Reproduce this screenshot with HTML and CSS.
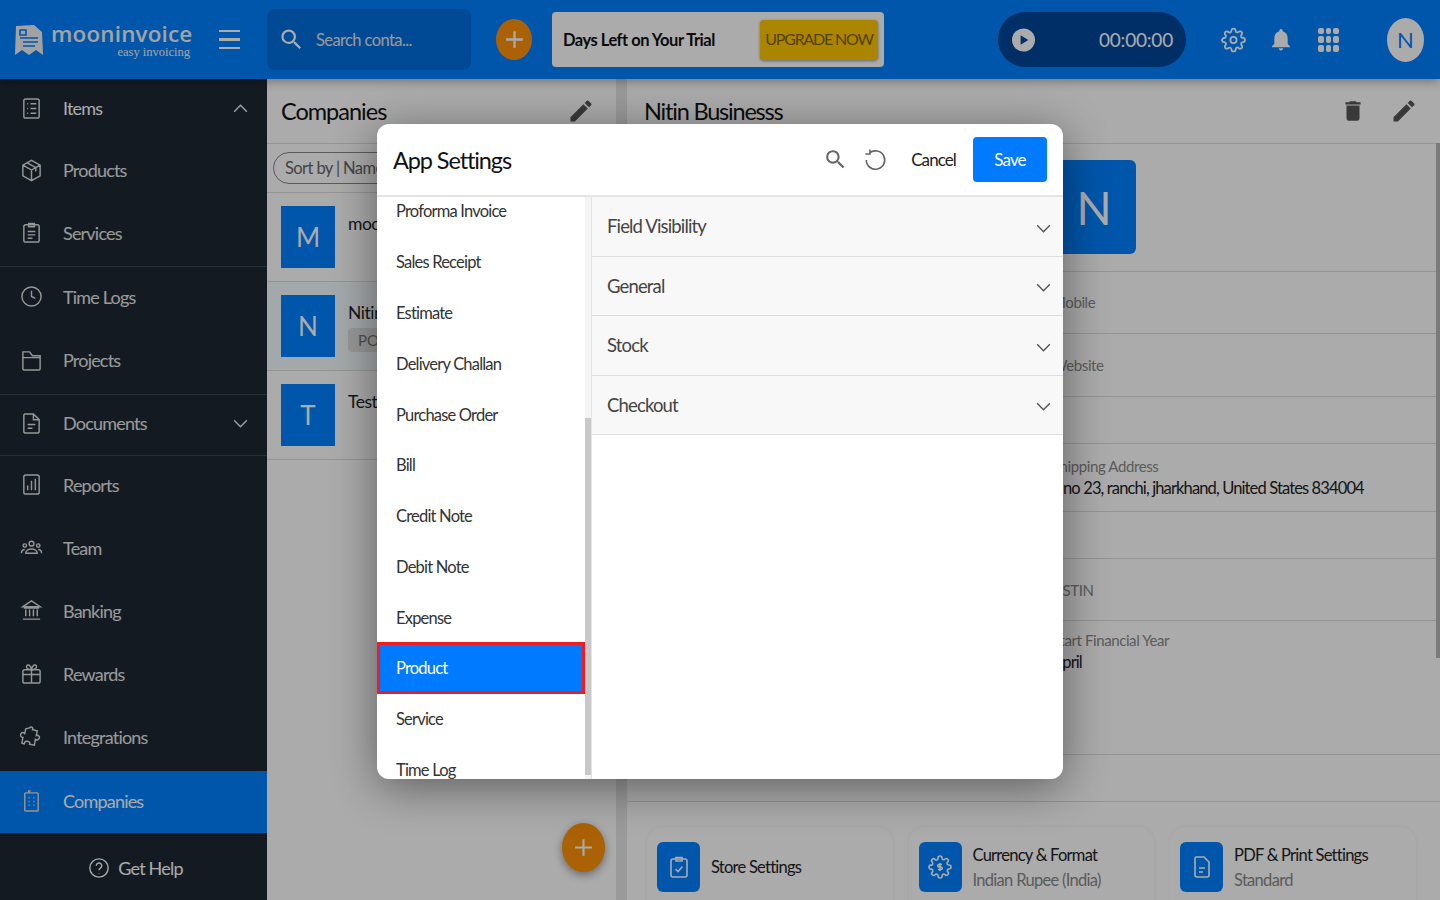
FILE: index.html
```html
<!DOCTYPE html>
<html lang="en">
<head>
    <meta charset="UTF-8">
    <title>Mooninvoice - App Settings</title>
    <link rel="stylesheet" href="styles.css">
</head>
<body>
    <header class="topbar">
        <div class="brand">
            <svg class="brand-icon" viewBox="0 0 28 32"><path d="M1 2 L19 1 L27 8 L28 31 L21 26 L14 31 L7 26 L0 31 Z" fill="#f2f2f2"/><path d="M5 6h6v5H5zM5 14h18M8 18h15M8 22h12" stroke="#0080ff" stroke-width="1.6" fill="none"/></svg>
            <div class="brand-text">
                <div class="brand-name">mooninvoice</div>
                <div class="brand-tag">easy invoicing</div>
            </div>
        </div>
        <div class="burger"><span></span><span></span><span></span></div>
        <div class="searchbox">
            <svg class="icon-search" viewBox="0 0 24 24"><path d="M15.5 14h-.79l-.28-.27A6.471 6.471 0 0 0 16 9.5 6.5 6.5 0 1 0 9.5 16c1.61 0 3.09-.59 4.23-1.57l.27.28v.79l5 4.99L20.49 19l-4.99-5zm-6 0C7.01 14 5 11.99 5 9.5S7.01 5 9.5 5 14 7.01 14 9.5 11.99 14 9.5 14z"/></svg>
            <span>Search conta...</span>
        </div>
        <div class="add-round">
            <svg viewBox="0 0 24 24"><path d="M12 4v16M4 12h16"/></svg>
        </div>
        <div class="trial">
            <span class="trial-text">Days Left on Your Trial</span>
            <span class="upgrade">UPGRADE NOW</span>
        </div>
        <div class="timer">
            <svg class="play" viewBox="0 0 24 24"><circle cx="12" cy="12" r="12" fill="#fff"/><path d="M9 7l8 5-8 5z" fill="#00479c"/></svg>
            <span>00:00:00</span>
        </div>
        <svg class="top-gear" viewBox="0 0 24 24"><circle cx="12" cy="12" r="3"/><path d="M19.4 15a1.65 1.65 0 0 0 .33 1.82l.06.06a2 2 0 0 1 0 2.83 2 2 0 0 1-2.83 0l-.06-.06a1.65 1.65 0 0 0-1.82-.33 1.65 1.65 0 0 0-1 1.51V21a2 2 0 0 1-2 2 2 2 0 0 1-2-2v-.09A1.65 1.65 0 0 0 9 19.4a1.65 1.65 0 0 0-1.82.33l-.06.06a2 2 0 0 1-2.83 0 2 2 0 0 1 0-2.83l.06-.06a1.65 1.65 0 0 0 .33-1.82 1.65 1.65 0 0 0-1.51-1H3a2 2 0 0 1-2-2 2 2 0 0 1 2-2h.09A1.65 1.65 0 0 0 4.6 9a1.65 1.65 0 0 0-.33-1.82l-.06-.06a2 2 0 0 1 0-2.83 2 2 0 0 1 2.83 0l.06.06a1.65 1.65 0 0 0 1.82.33H9a1.65 1.65 0 0 0 1-1.51V3a2 2 0 0 1 2-2 2 2 0 0 1 2 2v.09a1.65 1.65 0 0 0 1 1.51 1.65 1.65 0 0 0 1.82-.33l.06-.06a2 2 0 0 1 2.83 0 2 2 0 0 1 0 2.83l-.06.06a1.65 1.65 0 0 0-.33 1.82V9a1.65 1.65 0 0 0 1.51 1H21a2 2 0 0 1 2 2 2 2 0 0 1-2 2h-.09a1.65 1.65 0 0 0-1.51 1z"/></svg>
        <svg class="top-bell" viewBox="3 2 18 21"><path d="M12 22c1.1 0 2-.9 2-2h-4c0 1.1.9 2 2 2zm6-6v-5c0-3.07-1.63-5.64-4.5-6.32V4c0-.83-.67-1.5-1.5-1.5s-1.5.67-1.5 1.5v.68C7.64 5.36 6 7.92 6 11v5l-2 2v1h16v-1l-2-2z"/></svg>
        <div class="apps">
            <i></i><i></i><i></i><i></i><i></i><i></i><i></i><i></i><i></i>
        </div>
        <div class="avatar">N</div>
    </header>

    <div class="workspace">
        <nav class="sidebar">
            <div class="nav-group group-items">
                <div class="nav-row">
                    <svg viewBox="0 0 24 24"><rect x="4" y="2" width="16" height="20" rx="2"/><path d="M7.5 7h1M11 7h6M7.5 12h1M11 12h6M7.5 17h1M11 17h6"/></svg>
                    <span class="white">Items</span>
                    <svg class="chev" viewBox="0 0 24 24"><path d="M4 16l8-8 8 8"/></svg>
                </div>
                <div class="nav-row">
                    <svg viewBox="0 0 24 24"><path d="M12 1.5l9 5v11l-9 5-9-5v-11zM3 6.5l9 5 9-5M12 11.5v11M7.5 4l9 5v4"/></svg>
                    <span>Products</span>
                </div>
                <div class="nav-row">
                    <svg viewBox="0 0 24 24"><rect x="4" y="4" width="16" height="18" rx="2"/><path d="M9 2.5h6v3.500H9zM8 11h8M8 14.500h8M8 18h5"/></svg>
                    <span>Services</span>
                </div>
            </div>
            <div class="nav-group group-work">
                <div class="nav-row">
                    <svg viewBox="0 0 24 24"><circle cx="12" cy="12" r="10"/><path d="M12 6v6l4 2"/></svg>
                    <span>Time Logs</span>
                </div>
                <div class="nav-row">
                    <svg viewBox="0 0 24 24"><path d="M3 6V3h7l3 4h8v13a2 2 0 0 1-2 2H5a2 2 0 0 1-2-2zM3 9h18"/></svg>
                    <span>Projects</span>
                </div>
            </div>
            <div class="nav-group group-docs">
                <div class="nav-row">
                    <svg viewBox="0 0 24 24"><path d="M5 2h9l6 6v12a2 2 0 0 1-2 2H6a2 2 0 0 1-2-2V3zM14 2v6h6M8 13h8M8 17h5"/></svg>
                    <span>Documents</span>
                    <svg class="chev" viewBox="0 0 24 24"><path d="M4 8l8 8 8-8"/></svg>
                </div>
            </div>
            <div class="nav-group group-more">
                <div class="nav-row">
                    <svg viewBox="0 0 24 24"><rect x="4" y="2" width="16" height="20" rx="2"/><path d="M8 18v-5M12 18V8M16 18V6"/></svg>
                    <span>Reports</span>
                </div>
                <div class="nav-row">
                    <svg viewBox="0 0 24 24"><circle cx="12" cy="8" r="2.500"/><circle cx="5" cy="10" r="1.800"/><circle cx="19" cy="10" r="1.800"/><path d="M6 18c0-6 12-6 12 0zM1.500 18c0-3 2-4 3.500-4M22.500 18c0-3-2-4-3.500-4"/></svg>
                    <span>Team</span>
                </div>
                <div class="nav-row">
                    <svg viewBox="0 0 24 24"><path d="M3 8l9-6 9 6zM6 11v7M10 11v7M14 11v7M18 11v7M3 21h18M4 9.500h16"/></svg>
                    <span>Banking</span>
                </div>
                <div class="nav-row">
                    <svg viewBox="0 0 24 24"><rect x="3" y="8" width="18" height="14" rx="2"/><path d="M3 13h18M12 8v14M12 8C8 8 6 6 7 4s4-1 5 4c1-5 4-6 5-4s-1 4-5 4"/></svg>
                    <span>Rewards</span>
                </div>
                <div class="nav-row">
                    <svg viewBox="0 0 24 24"><path d="M10 3c2-2 4 0 3 2l5 1-1 5c2-1 4 1 3 3s-3 2-4 1l-1 6-5-1c1-2-1-3-3-3s-3 2-2 3l-3-1 1-6c-2 0-3-2-2-4s3-1 4 0l1-5z"/></svg>
                    <span>Integrations</span>
                </div>
            </div>
            <div class="nav-row nav-active">
                <svg viewBox="0 0 24 24"><rect x="5" y="3" width="14" height="19" rx="1"/><path d="M9 3V1h2M9 8h1M14 8h1M9 12h1M14 12h1M9 16h1M14 16h1"/></svg>
                <span>Companies</span>
            </div>
            <div class="get-help">
                <svg viewBox="0 0 24 24"><circle cx="12" cy="12" r="10"/><path d="M9 9.500a3 3 0 1 1 4.500 2.600c-1 .6-1.500 1.200-1.500 2.400M12 17.500v.5"/></svg>
                <span>Get Help</span>
            </div>
        </nav>

        <section class="companies">
            <div class="panel-head">
                <h2>Companies</h2>
                <svg class="tool" viewBox="0 0 24 24"><path d="M3 17.250V21h3.750L17.810 9.940l-3.750-3.750L3 17.250zM20.710 7.040a1 1 0 0 0 0-1.410l-2.340-2.340a1 1 0 0 0-1.410 0l-1.830 1.830 3.750 3.750 1.830-1.830z"/></svg>
            </div>
            <div class="sort-row">
                <div class="sort-pill">Sort by | Name</div>
            </div>
            <div class="company">
                <div class="tile">M</div>
                <div class="company-info"><div class="company-name">mooninvoice</div></div>
            </div>
            <div class="company company-selected">
                <div class="tile">N</div>
                <div class="company-info">
                    <div class="company-name">Nitin Businesss</div>
                    <div class="badge">POS</div>
                </div>
            </div>
            <div class="company">
                <div class="tile">T</div>
                <div class="company-info"><div class="company-name">Test</div></div>
            </div>
            <div class="fab">
                <svg viewBox="0 0 24 24"><path d="M12 4v16M4 12h16"/></svg>
            </div>
        </section>

        <section class="detail">
            <div class="panel-head detail-head">
                <h2>Nitin Businesss</h2>
                <svg class="tool trash" viewBox="0 0 24 24"><path d="M6 19c0 1.100.9 2 2 2h8c1.100 0 2-.9 2-2V7H6v12zM19 4h-3.500l-1-1h-5l-1 1H5v2h14V4z"/></svg>
                <svg class="tool" viewBox="0 0 24 24"><path d="M3 17.250V21h3.750L17.810 9.940l-3.750-3.750L3 17.250zM20.710 7.040a1 1 0 0 0 0-1.410l-2.340-2.340a1 1 0 0 0-1.410 0l-1.830 1.830 3.750 3.750 1.830-1.830z"/></svg>
            </div>
            <div class="field field-logo"><div class="logo-tile">N</div></div>
            <div class="field field-mobile"><div class="label">Mobile</div></div>
            <div class="field field-web"><div class="label">Website</div></div>
            <div class="field field-blank"></div>
            <div class="field field-ship">
                <div class="label">Shipping Address</div>
                <div class="value value-address">no 23, ranchi, jharkhand, United States 834004</div>
            </div>
            <div class="field field-blank"></div>
            <div class="field field-gst"><div class="label">GSTIN</div></div>
            <div class="field field-year">
                <div class="label">Start Financial Year</div>
                <div class="value">April</div>
            </div>
            <div class="field field-blank"></div>
            <div class="cards">
                <div class="card">
                    <div class="card-icon">
                        <svg viewBox="0 0 24 24"><rect x="4" y="4" width="16" height="18" rx="2"/><path d="M9 2.500h6v3.500H9zM8.500 14l2.500 2.500 4.500-5"/></svg>
                    </div>
                    <div class="card-title">Store Settings</div>
                </div>
                <div class="card">
                    <div class="card-icon">
                        <svg viewBox="0 0 24 24"><path d="M19.400 15a1.650 1.650 0 0 0 .33 1.820l.06.06a2 2 0 0 1-2.830 2.830l-.06-.06a1.650 1.650 0 0 0-2.820 1.180V21a2 2 0 0 1-4 0v-.09A1.650 1.650 0 0 0 7.180 19.730l-.06.06a2 2 0 0 1-2.830-2.830l.06-.06a1.650 1.650 0 0 0-1.180-2.820H3a2 2 0 0 1 0-4h.09a1.650 1.650 0 0 0 1.180-2.820l-.06-.06a2 2 0 0 1 2.830-2.830l.06.06A1.650 1.650 0 0 0 10 3.090V3a2 2 0 0 1 4 0v.09a1.650 1.650 0 0 0 2.820 1.180l.06-.06a2 2 0 0 1 2.830 2.830l-.06.06A1.650 1.650 0 0 0 20.910 10H21a2 2 0 0 1 0 4h-.09a1.650 1.650 0 0 0-1.510 1z"/><path d="M14 9.500h-3a1.250 1.250 0 0 0 0 2.500h2a1.250 1.250 0 0 1 0 2.500h-3M12 8v8"/></svg>
                    </div>
                    <div class="card-text">
                        <div class="card-title">Currency &amp; Format</div>
                        <div class="card-sub">Indian Rupee (India)</div>
                    </div>
                </div>
                <div class="card">
                    <div class="card-icon">
                        <svg viewBox="0 0 24 24"><path d="M6 2h8l5 5v13a2 2 0 0 1-2 2H7a2 2 0 0 1-2-2V3zM9 13h6M9 17h4"/></svg>
                    </div>
                    <div class="card-text">
                        <div class="card-title">PDF &amp; Print Settings</div>
                        <div class="card-sub">Standard</div>
                    </div>
                </div>
            </div>
            <div class="page-scroll"></div>
        </section>
    </div>

    <div class="backdrop"></div>

    <div class="modal">
        <div class="modal-head">
            <h1>App Settings</h1>
            <svg class="modal-search" viewBox="0 0 24 24"><path d="M15.500 14h-.79l-.28-.27A6.471 6.471 0 0 0 16 9.500 6.500 6.500 0 1 0 9.500 16c1.610 0 3.090-.59 4.230-1.570l.27.28v.79l5 4.990L20.490 19l-4.990-5zm-6 0C7.010 14 5 11.990 5 9.500S7.010 5 9.500 5 14 7.010 14 9.500 11.990 14 9.500 14z"/></svg>
            <svg class="modal-reset" viewBox="0 0 24 24"><path d="M6 5.500A10 10 0 1 1 2.500 13M6.500 1.500v5h-5" transform="translate(1 .5) scale(.92)"/></svg>
            <span class="cancel">Cancel</span>
            <span class="save">Save</span>
        </div>
        <div class="modal-body">
            <div class="doc-list">
                <div class="doc-items">
                    <div class="doc-item">Proforma Invoice</div>
                    <div class="doc-item">Sales Receipt</div>
                    <div class="doc-item">Estimate</div>
                    <div class="doc-item">Delivery Challan</div>
                    <div class="doc-item">Purchase Order</div>
                    <div class="doc-item">Bill</div>
                    <div class="doc-item">Credit Note</div>
                    <div class="doc-item">Debit Note</div>
                    <div class="doc-item">Expense</div>
                    <div class="doc-item doc-active">Product</div>
                    <div class="doc-item">Service</div>
                    <div class="doc-item">Time Log</div>
                </div>
                <div class="doc-scroll"><div class="doc-thumb"></div></div>
            </div>
            <div class="accordions">
                <div class="accordion"><span>Field Visibility</span><svg viewBox="0 0 24 24"><path d="M4 8l8 8 8-8"/></svg></div>
                <div class="accordion"><span>General</span><svg viewBox="0 0 24 24"><path d="M4 8l8 8 8-8"/></svg></div>
                <div class="accordion"><span>Stock</span><svg viewBox="0 0 24 24"><path d="M4 8l8 8 8-8"/></svg></div>
                <div class="accordion"><span>Checkout</span><svg viewBox="0 0 24 24"><path d="M4 8l8 8 8-8"/></svg></div>
            </div>
        </div>
    </div>
</body>
</html>
```

FILE: styles.css
```css
* {
    box-sizing: border-box;
}

body {
    margin: 0;
    width: 1440px;
    height: 900px;
    overflow: hidden;
    position: relative;
    font-family: Lato, "Liberation Sans", sans-serif;
    background: #fff;
    color: #222;
}

h1, h2 {
    margin: 0;
    font-weight: 400;
}

/* Top bar */
.topbar {
    height: 79px;
    background: #0080ff;
    display: flex;
    align-items: center;
    color: #fff;
    position: relative;
    box-shadow: 0 2px 10px rgba(0, 0, 0, 0.35);
    z-index: 2;
}

.brand {
    width: 219px;
    padding-left: 15px;
    display: flex;
    align-items: center;
    gap: 8px;
}

.brand-icon {
    width: 28px;
    height: 32px;
    flex: none;
}

.brand-text {
    width: 141px;
}

.brand-name {
    font-family: "Open Sans", sans-serif;
    font-size: 22.400px;
    font-weight: 600;
    line-height: 25px;
    letter-spacing: 0.2px;
    color: #f4f4f4;
    white-space: nowrap;
}

.brand-tag {
    font-family: "Liberation Serif", serif;
    font-size: 12.500px;
    line-height: 13px;
    text-align: right;
    color: #f4f4f4;
    padding-right: 2px;
}

.burger {
    width: 21px;
    display: flex;
    flex-direction: column;
    gap: 6px;
}

.burger span {
    height: 2.500px;
    background: #fff;
}

.searchbox {
    width: 204px;
    height: 61px;
    margin-left: 27px;
    background: #006fdf;
    border-radius: 8px;
    display: flex;
    align-items: center;
    padding-left: 11px;
    gap: 11px;
    font-size: 16.500px;
    letter-spacing: -0.6px;
    color: #e4e4e4;
}

.icon-search {
    width: 27px;
    height: 29px;
    fill: #fff;
}

.add-round {
    width: 36px;
    height: 41px;
    margin-left: 25px;
    border-radius: 50%;
    background: #ff9309;
    display: flex;
    align-items: center;
    justify-content: center;
}

.add-round svg {
    width: 25px;
    height: 25px;
    fill: none;
    stroke: #fff;
    stroke-width: 2.200;
}

.trial {
    width: 332px;
    height: 55px;
    margin-left: 20px;
    background: #fff;
    border-radius: 4px;
    display: flex;
    align-items: center;
    justify-content: space-between;
    padding: 0 6px 0 11px;
}

.trial-text {
    font-size: 16.500px;
    font-weight: 700;
    letter-spacing: -0.5px;
    color: #111;
    white-space: nowrap;
}

.upgrade {
    width: 118px;
    height: 40px;
    padding-bottom: 2px;
    background: #ffc700;
    border-radius: 4px;
    box-shadow: 0 1px 3px rgba(0, 0, 0, 0.4);
    color: #7c6200;
    font-size: 16px;
    letter-spacing: -1.200px;
    white-space: nowrap;
    display: flex;
    align-items: center;
    justify-content: center;
}

.timer {
    width: 188px;
    height: 55px;
    margin-left: 114px;
    background: #00479c;
    border-radius: 28px;
    display: flex;
    align-items: center;
    justify-content: space-between;
    padding: 0 13px 0 14px;
    font-size: 19px;
    letter-spacing: -0.2px;
}

.play {
    width: 23px;
    height: 24px;
}

.top-gear {
    width: 25px;
    height: 28px;
    margin-left: 35px;
    fill: none;
    stroke: #fff;
    stroke-width: 1.700;
}

.top-bell {
    width: 20px;
    height: 28px;
    margin-left: 25px;
    fill: #fff;
}

.apps {
    width: 21px;
    height: 24px;
    margin-left: 27px;
    display: grid;
    grid-template-columns: repeat(3, 1fr);
    gap: 2px;
}

.apps i {
    background: #fff;
    border-radius: 2px;
}

.avatar {
    width: 37px;
    height: 44px;
    margin-left: 48px;
    border-radius: 50%;
    background: #fff;
    color: #0080ff;
    font-size: 22px;
    display: flex;
    align-items: center;
    justify-content: center;
}

/* Page under the bar */
.workspace {
    height: 821px;
    display: flex;
}

.sidebar {
    width: 267px;
    flex: none;
    background: #1f2834;
    color: #fff;
    display: flex;
    flex-direction: column;
}

.nav-group {
    display: flex;
    flex-direction: column;
    border-bottom: 1px solid #3c4551;
}

.nav-group .nav-row {
    flex: 1;
}

.group-items { height: 188px; }
.group-work  { height: 128px; }
.group-docs  { height: 61px; }
.group-more  { height: 315px; border-bottom: 0; }

.nav-row {
    display: flex;
    align-items: center;
    padding: 0 20px 4px;
    gap: 20px;
    font-size: 18px;
    letter-spacing: -0.800px;
    color: #e6e6e6;
}

.group-more .nav-row {
    padding-bottom: 6px;
}

.nav-row .white {
    color: #fff;
}

.nav-row svg {
    width: 23px;
    height: 25px;
    flex: none;
    fill: none;
    stroke: #e0e0e0;
    stroke-width: 1.500;
}

.nav-row svg.chev {
    width: 19px;
    height: 19px;
    margin-left: auto;
    margin-right: -3px;
    stroke: #f0f0f0;
    stroke-width: 1.800;
}

.nav-active {
    height: 62px;
    padding-bottom: 2px;
    background: #0080ff;
    color: #fff;
}

.get-help {
    flex: 1;
    display: flex;
    align-items: center;
    justify-content: center;
    gap: 8px;
    font-size: 18px;
    letter-spacing: -0.800px;
    padding-top: 3px;
    padding-left: 4px;
}

.get-help svg {
    width: 22px;
    height: 24px;
    fill: none;
    stroke: #fff;
    stroke-width: 1.500;
}

/* Company list */
.companies {
    width: 349px;
    flex: none;
    position: relative;
    background: #fff;
}

.panel-head {
    height: 65px;
    display: flex;
    align-items: center;
    justify-content: space-between;
    padding: 0 21px 1px 14px;
    border-bottom: 1px solid #ddd;
}

.panel-head h2 {
    font-size: 23.500px;
    letter-spacing: -1px;
    color: #111;
}

.tool {
    width: 28px;
    height: 30px;
    fill: #555;
}

.sort-row {
    height: 49px;
    padding: 8px 6px;
    border-bottom: 1px solid #ddd;
}

.sort-pill {
    width: 200px;
    height: 32px;
    border: 1px solid #888;
    border-radius: 16px;
    padding-left: 11px;
    font-size: 16.500px;
    letter-spacing: -0.600px;
    line-height: 30px;
    color: #666;
}

.company {
    height: 89px;
    display: flex;
    padding: 13px 14px;
    gap: 13px;
    border-bottom: 1px solid #ddd;
}

.company-selected {
    background: #f3fbff;
}

.tile {
    width: 54px;
    height: 62px;
    flex: none;
    background: #0080ff;
    color: #fff;
    font-size: 26px;
    display: flex;
    align-items: center;
    justify-content: center;
}

.company-info {
    white-space: nowrap;
}

.company-name {
    font-size: 17.500px;
    letter-spacing: -0.500px;
    margin-top: 7px;
}

.badge {
    display: inline-block;
    margin-top: 5px;
    padding: 3px 10px;
    background: #e2e2e2;
    border-radius: 4px;
    font-size: 15px;
    color: #777;
}

.fab {
    position: absolute;
    right: 11px;
    bottom: 28px;
    width: 43px;
    height: 49px;
    border-radius: 50%;
    background: #ff9309;
    box-shadow: 0 3px 8px rgba(0, 0, 0, 0.4);
    display: flex;
    align-items: center;
    justify-content: center;
}

.fab svg {
    width: 25px;
    height: 25px;
    fill: none;
    stroke: #fff;
    stroke-width: 2;
}

/* Detail */
.detail {
    flex: 1;
    position: relative;
    border-left: 11px solid #e6e6e6;
    background: #fff;
}

.detail-head {
    padding: 0 22px 1px 17px;
    gap: 24px;
}

.detail-head h2 {
    margin-right: auto;
    letter-spacing: -1.200px;
}

.trash {
    width: 26px;
}

.field {
    padding-left: 425px;
    border-bottom: 1px solid #ddd;
    font-size: 15px;
}

.field-logo   { height: 128px; padding-top: 16px; }
.field-mobile { height: 62px; padding-top: 21px; }
.field-web    { height: 63px; padding-top: 22px; }
.field-blank  { height: 47px; }
.field-ship   { height: 68px; padding-top: 13px; }
.field-gst    { height: 62px; padding-top: 22px; }
.field-year   { height: 134px; padding-top: 10px; }

.logo-tile {
    width: 84px;
    height: 94px;
    background: #0080ff;
    color: #fff;
    border-radius: 6px;
    font-size: 46px;
    display: flex;
    align-items: center;
    justify-content: center;
}

.label {
    color: #888;
    letter-spacing: -0.400px;
    line-height: 18px;
}

.value {
    color: #222;
    font-size: 16.500px;
    letter-spacing: -0.870px;
    line-height: 26px;
}

.value-address {
    padding-left: 11px;
    white-space: nowrap;
}

.cards {
    display: flex;
    gap: 16px;
    padding: 25px 0 0 20px;
}

.card {
    width: 245.500px;
    height: 90px;
    padding: 15px 10px;
    border-radius: 16px;
    background: #fff;
    box-shadow: 0 0 4px rgba(0, 0, 0, 0.05);
    display: flex;
    gap: 11px;
    align-items: flex-start;
}

.card-icon {
    width: 43px;
    height: 50px;
    flex: none;
    background: #0080ff;
    border-radius: 6px;
    display: flex;
    align-items: center;
    justify-content: center;
}

.card-icon svg {
    width: 24px;
    height: 26px;
    fill: none;
    stroke: #fff;
    stroke-width: 1.600;
}

.card-title {
    font-size: 16.500px;
    letter-spacing: -0.750px;
    line-height: 26px;
    color: #222;
}

.card-icon + .card-title {
    line-height: 50px;
}

.card-sub {
    font-size: 16.500px;
    letter-spacing: -0.700px;
    color: #888;
    line-height: 24px;
}

.page-scroll {
    position: absolute;
    top: 64px;
    right: 0;
    width: 4px;
    height: 515px;
    background: #b8b8b8;
}

/* Overlay and modal */
.backdrop {
    position: absolute;
    inset: 0;
    background: rgba(0, 0, 0, 0.33);
    z-index: 5;
}

.modal {
    position: absolute;
    left: 377px;
    top: 124px;
    width: 686px;
    height: 655px;
    background: #fff;
    border-radius: 12px;
    overflow: hidden;
    box-shadow: 0 8px 45px rgba(0, 0, 0, 0.45);
    z-index: 6;
    display: flex;
    flex-direction: column;
}

.modal-head {
    height: 73px;
    flex: none;
    display: flex;
    align-items: center;
    padding: 0 16px;
    border-bottom: 2px solid #e4e4e4;
}

.modal-head h1 {
    font-size: 23.500px;
    letter-spacing: -1.100px;
    color: #111;
    margin-right: auto;
}

.modal-search {
    width: 25px;
    height: 27px;
    fill: #666;
}

.modal-reset {
    width: 24px;
    height: 27px;
    margin-left: 15px;
    fill: none;
    stroke: #666;
    stroke-width: 1.800;
}

.cancel {
    margin-left: 24px;
    font-size: 17px;
    letter-spacing: -0.900px;
    color: #222;
}

.save {
    width: 74px;
    height: 45px;
    margin-left: 17px;
    background: #007bff;
    color: #fff;
    border-radius: 4px;
    font-size: 17px;
    letter-spacing: -0.900px;
    display: flex;
    align-items: center;
    justify-content: center;
}

.modal-body {
    flex: 1;
    display: flex;
    min-height: 0;
}

.doc-list {
    width: 215px;
    flex: none;
    display: flex;
    overflow: hidden;
    border-right: 1px solid #e4e4e4;
}

.doc-items {
    width: 208px;
    flex: none;
    margin-top: -11px;
}

.doc-item {
    height: 50.800px;
    display: flex;
    align-items: center;
    padding-left: 19px;
    font-size: 16.500px;
    letter-spacing: -0.800px;
    color: #333;
}

.doc-active {
    height: 52px;
    margin: -1.600px 0 0.400px;
    background: #007bff;
    color: #fff;
    border: 3px solid #ed1c24;
    padding-left: 16px;
}

.doc-scroll {
    width: 6px;
    flex: none;
    background: #f4f4f4;
    padding-top: 221px;
    padding-bottom: 4px;
}

.doc-thumb {
    height: 100%;
    background: #c8c8c8;
}

.accordions {
    flex: 1;
}

.accordion {
    height: 59.500px;
    display: flex;
    align-items: center;
    justify-content: space-between;
    padding: 0 10px 0 15px;
    background: #f8f8f8;
    border-bottom: 1px solid #ddd;
    font-size: 18.500px;
    letter-spacing: -0.850px;
    color: #444;
}

.accordion svg {
    width: 19px;
    height: 19px;
    margin-top: 4px;
    fill: none;
    stroke: #555;
    stroke-width: 1.800;
}
```
